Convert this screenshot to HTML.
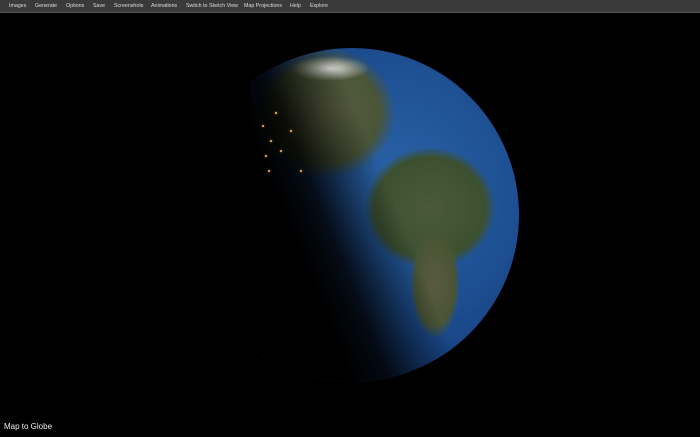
<!DOCTYPE html>
<html><head><style>
html,body{margin:0;padding:0;background:#000;width:700px;height:437px;overflow:hidden;font-family:"Liberation Sans",sans-serif}
.bar{position:absolute;left:0;top:0;width:700px;height:12px;background:#3a3a3a;border-bottom:1px solid #555}
.bar span{position:absolute;top:3px;font-size:5.3px;color:#ddd;white-space:nowrap}
.lbl{position:absolute;left:4px;top:422px;font-size:8px;color:#eee}
.g{position:absolute;left:185px;top:48px;width:334px;height:334px;border-radius:50%;overflow:hidden;
background:radial-gradient(circle at 62% 42%,#2a63a8 0%,#1d4f92 45%,#163e7c 72%,#1f5aa8 92%,#a9cdf5 100%)}
.blob{position:absolute;border-radius:50%}
.shade{position:absolute;inset:-2px;background:linear-gradient(68deg,#000 0%,#000 36%,rgba(0,0,0,.85) 44%,rgba(0,0,0,.4) 52%,rgba(0,0,0,0) 60%)}
.cover{position:absolute;left:170px;top:40px;width:80px;height:360px;background:#000}
.l{position:absolute;width:2px;height:2px;border-radius:50%;background:#f5c060;box-shadow:0 0 2px #e90}
</style></head><body>
<div class="bar">
<span style="left:9px">Images</span><span style="left:35px">Generate</span><span style="left:66px">Options</span><span style="left:93px">Save</span><span style="left:114px">Screenshots</span><span style="left:151px">Animations</span><span style="left:186px">Switch to Sketch View</span><span style="left:244px">Map Projections</span><span style="left:290px">Help</span><span style="left:310px">Explore</span>
</div>
<div class="g">
<div class="blob" style="left:180px;top:100px;width:130px;height:120px;background:radial-gradient(#4a5a3a,#3c5030 60%,rgba(60,80,50,0) 72%)"></div>
<div class="blob" style="left:225px;top:180px;width:50px;height:110px;background:radial-gradient(#5a5a40,#4a5535 55%,rgba(60,80,50,0) 72%)"></div>
<div class="blob" style="left:70px;top:0px;width:140px;height:130px;background:radial-gradient(#5b5f42,#4a5538 55%,rgba(60,80,50,0) 72%)"></div>
<div class="blob" style="left:105px;top:8px;width:80px;height:25px;background:radial-gradient(#ddd,rgba(200,200,200,0) 70%)"></div>
<div class="shade"></div>
</div>
<div class="cover"></div>
<div class="l" style="left:262px;top:125px"></div><div class="l" style="left:270px;top:140px"></div>
<div class="l" style="left:280px;top:150px"></div><div class="l" style="left:265px;top:155px"></div>
<div class="l" style="left:290px;top:130px"></div><div class="l" style="left:300px;top:170px"></div>
<div class="l" style="left:268px;top:170px"></div><div class="l" style="left:275px;top:112px"></div>
<div class="lbl">Map to Globe</div>
</body></html>
